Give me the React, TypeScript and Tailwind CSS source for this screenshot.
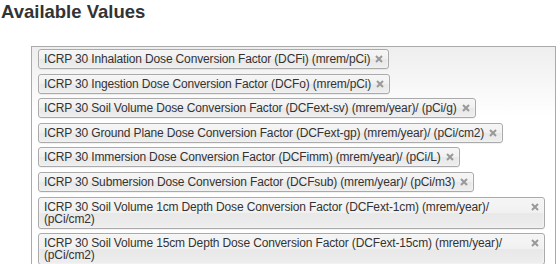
const VALUES = [
  "ICRP 30 Inhalation Dose Conversion Factor (DCFi) (mrem/pCi)",
  "ICRP 30 Ingestion Dose Conversion Factor (DCFo) (mrem/pCi)",
  "ICRP 30 Soil Volume Dose Conversion Factor (DCFext-sv) (mrem/year)/ (pCi/g)",
  "ICRP 30 Ground Plane Dose Conversion Factor (DCFext-gp) (mrem/year)/ (pCi/cm2)",
  "ICRP 30 Immersion Dose Conversion Factor (DCFimm) (mrem/year)/ (pCi/L)",
  "ICRP 30 Submersion Dose Conversion Factor (DCFsub) (mrem/year)/ (pCi/m3)",
  "ICRP 30 Soil Volume 1cm Depth Dose Conversion Factor (DCFext-1cm) (mrem/year)/ (pCi/cm2)",
  "ICRP 30 Soil Volume 15cm Depth Dose Conversion Factor (DCFext-15cm) (mrem/year)/ (pCi/cm2)",
];

function RemoveIcon() {
  return (
    <svg width="8" height="8" viewBox="0 0 8 8" className="block">
      <path d="M1 1L7 7M7 1L1 7" stroke="#999" strokeWidth="2" />
    </svg>
  );
}

function Choice({ label }: { label: string }) {
  return (
    <li className="relative max-w-[507px] self-start rounded-[3px] border border-[#aaa] bg-[linear-gradient(to_bottom,#f4f4f4_20%,#f0f0f0_50%,#e8e8e8_52%,#eee_100%)] py-[3px] pl-[5px] pr-[18px] text-[12px] leading-[12px] tracking-[-0.15px] text-[#333] shadow-[inset_0_0_2px_#fff,0_1px_0_rgba(0,0,0,0.05)]">
      {label}
      <span className="absolute right-[5px] top-[5px]">
        <RemoveIcon />
      </span>
    </li>
  );
}

export default function App() {
  return (
    <div className="h-[264px] w-[560px] overflow-hidden bg-white font-['Liberation_Sans',Arial,sans-serif]">
      <h3 className="pl-[1px] pt-[1px] text-[18.5px] font-bold leading-[22px] text-[#333]">
        Available Values
      </h3>
      <div className="ml-[31px] mt-[23px] w-[525px] border border-[#aaa] bg-[linear-gradient(to_bottom,#eee_0px,#fff_70px)] pb-4 pt-[2px]">
        <ul className="flex flex-col gap-[4.6px] pl-[6px]">
          {VALUES.map((v) => (
            <Choice key={v} label={v} />
          ))}
        </ul>
      </div>
    </div>
  );
}
